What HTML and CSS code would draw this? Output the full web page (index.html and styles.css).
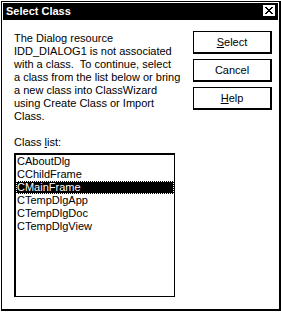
FILE: index.html
```html
<!DOCTYPE html>
<html>
<head>
<meta charset="utf-8">
<link rel="stylesheet" href="styles.css">
</head>
<body>
<div class="win">
  <div class="titlebar">
    <span class="title">Select Class</span>
    <span class="close"><svg width="8" height="7" viewBox="0 0 8 7"><path d="M0 0h2v1h-2zM6 0h2v1h-2zM1 1h2v1h-2zM5 1h2v1h-2zM2 2h4v1h-4zM3 3h2v1h-2zM2 4h4v1h-4zM1 5h2v1h-2zM5 5h2v1h-2zM0 6h2v1h-2zM6 6h2v1h-2z" fill="#000"/></svg></span>
  </div>
  <div class="client">
    <div class="left">
      <p class="msg">The Dialog resource<br>IDD_DIALOG1 is not associated<br>with a class.&nbsp; To continue, select<br>a class from the list below or bring<br>a new class into ClassWizard<br>using Create Class or Import<br>Class.</p>
      <div class="label">Class <u>l</u>ist:</div>
      <div class="listbox">
        <div class="item">CAboutDlg</div>
        <div class="item">CChildFrame</div>
        <div class="item sel">CMainFrame</div>
        <div class="item">CTempDlgApp</div>
        <div class="item">CTempDlgDoc</div>
        <div class="item">CTempDlgView</div>
      </div>
    </div>
    <div class="buttons">
      <div class="btn"><u>S</u>elect</div>
      <div class="btn">Cancel</div>
      <div class="btn"><u>H</u>elp</div>
    </div>
  </div>
</div>
</body>
</html>
```

FILE: styles.css
```css
html, body {
  margin: 0;
  padding: 0;
  background: #fff;
}
body {
  font-family: "Liberation Sans", Arial, sans-serif;
  font-size: 11px;
  line-height: 13px;
  color: #000;
}
.win {
  box-sizing: border-box;
  width: 280px;
  height: 310px;
  margin: 1px 0 0 1px;
  border-top: 1px solid #000;
  border-left: 1px solid #000;
  border-right: 2px solid #000;
  border-bottom: 2px solid #000;
  padding: 1px;
  background: #fff;
}
.titlebar {
  height: 17px;
  background: #000;
  display: flex;
  justify-content: space-between;
  align-items: flex-start;
  padding: 0 2px 0 3px;
}
.title {
  color: #fff;
  font-weight: bold;
  font-size: 11px;
  line-height: 17px;
}
.close {
  margin-top: 2px;
  box-sizing: border-box;
  width: 13px;
  height: 12px;
  background: #fff;
  border-right: 1px solid #000;
  border-bottom: 1px solid #000;
  display: flex;
  align-items: center;
  justify-content: center;
}
.close svg {
  display: block;
}
.client {
  display: flex;
  padding: 12px 6px 0 11px;
}
.left {
  flex: 1;
}
.msg {
  margin: 0;
  white-space: nowrap;
}
.label {
  margin-top: 13px;
}
.listbox {
  box-sizing: border-box;
  margin-top: 4px;
  width: 161px;
  height: 144px;
  border-top: 2px solid #000;
  border-left: 2px solid #000;
  border-right: 1px solid #000;
  border-bottom: 1px solid #000;
}
.item {
  height: 13px;
  padding-left: 1px;
  white-space: nowrap;
}
.item.sel {
  background: #000;
  color: #fff;
  outline: 1px dotted #fff;
  outline-offset: -1px;
}
.buttons {
  width: 79px;
  display: flex;
  flex-direction: column;
  gap: 5px;
  margin-top: -1px;
}
.btn {
  box-sizing: border-box;
  height: 23px;
  border-top: 1px solid #000;
  border-left: 1px solid #000;
  border-right: 2px solid #000;
  border-bottom: 2px solid #000;
  display: flex;
  align-items: center;
  justify-content: center;
}
```
